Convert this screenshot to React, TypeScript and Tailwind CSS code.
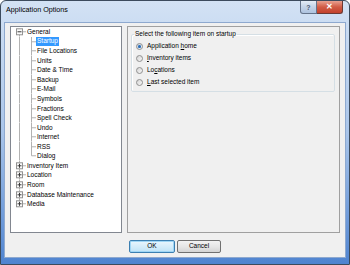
import React from "react";

const FONT = "font-['Liberation_Sans',Arial,sans-serif]";

const ROW = "h-[9.57px]";

type Node = { label: string; open?: boolean; children?: string[] };

const tree: Node[] = [
  {
    label: "General",
    open: true,
    children: [
      "Startup",
      "File Locations",
      "Units",
      "Date & Time",
      "Backup",
      "E-Mail",
      "Symbols",
      "Fractions",
      "Spell Check",
      "Undo",
      "Internet",
      "RSS",
      "Dialog",
    ],
  },
  { label: "Inventory Item" },
  { label: "Location" },
  { label: "Room" },
  { label: "Database Maintenance" },
  { label: "Media" },
];

const LINE = "#b2b2b2";

function Expander({ open, first, last }: { open?: boolean; first?: boolean; last?: boolean }) {
  const h = 9.57;
  const c = h / 2;
  return (
    <svg width="15" height={h} className="shrink-0">
      <line x1="8.5" y1={first ? c : 0} x2="8.5" y2={last ? c : h} stroke={LINE} />
      <line x1="11" y1={c} x2="15" y2={c} stroke={LINE} />
      <rect x="5.5" y={c - 3} width="6" height="6" fill="#fafafa" stroke="#929292" />
      <line x1="6.5" y1={c} x2="10.5" y2={c} stroke="#3a3a3a" />
      {!open && <line x1="8.5" y1={c - 2} x2="8.5" y2={c + 2} stroke="#3a3a3a" />}
    </svg>
  );
}

function Branch({ last }: { last?: boolean }) {
  const h = 9.57;
  const c = h / 2;
  return (
    <svg width="25" height={h} className="shrink-0">
      <line x1="8.5" y1="0" x2="8.5" y2={h} stroke={LINE} />
      <line x1="20.5" y1="0" x2="20.5" y2={last ? c : h} stroke={LINE} />
      <line x1="20.5" y1={c} x2="25" y2={c} stroke={LINE} />
    </svg>
  );
}

function Tree() {
  return (
    <div className="w-[112px] border border-[#828790] bg-white text-[6.5px] leading-[9.57px] text-black">
      {tree.map((n, i) => (
        <div key={n.label}>
          <div className={`flex items-center ${ROW}`}>
            <Expander open={n.open} first={i === 0} last={i === tree.length - 1} />
            <span className="pl-[1px]">{n.label}</span>
          </div>
          {n.open &&
            n.children?.map((c, j) => (
              <div key={c} className={`flex items-center ${ROW}`}>
                <Branch last={j === n.children!.length - 1} />
                <span
                  className={
                    j === 0
                      ? "bg-[#3399ff] px-[1px] text-white leading-[8.5px]"
                      : "px-[1px]"
                  }
                >
                  {c}
                </span>
              </div>
            ))}
        </div>
      ))}
    </div>
  );
}

function Radio({ checked, children }: { checked?: boolean; children: React.ReactNode }) {
  return (
    <div className="flex h-[12px] items-center gap-[4px]">
      <span className="flex h-[7px] w-[7px] items-center justify-center rounded-full border border-[#8f8f8f] bg-gradient-to-br from-[#d5d5d5] to-[#f7f7f7]">
        {checked && (
          <span className="h-[3px] w-[3px] rounded-full bg-[#2b6cb6] shadow-[0_0_1px_#6fb0f0]" />
        )}
      </span>
      <span>{children}</span>
    </div>
  );
}

function Panel() {
  return (
    <div className="flex-1 border border-[#a0a0a0] bg-[#f0f0f0] pl-[3px] pr-[4px] pt-[3px] text-[6.5px] leading-[8px] text-black">
      <fieldset className="rounded-[2px] border border-[#d5dfe5] pb-[3px] pl-[4px] shadow-[inset_1px_1px_0_#fff]">
        <legend className="ml-[-2px] px-[1px]">Select the following item on startup</legend>
        <div className="pt-[2px]">
          <Radio checked>
            Application <span className="underline">h</span>ome
          </Radio>
          <Radio>
            <span className="underline">I</span>nventory items
          </Radio>
          <Radio>
            Lo<span className="underline">c</span>ations
          </Radio>
          <Radio>
            <span className="underline">L</span>ast selected item
          </Radio>
        </div>
      </fieldset>
    </div>
  );
}

export default function App() {
  return (
    <div className={`h-[265px] w-[350px] overflow-hidden bg-white ${FONT}`}>
      <div className="flex h-full w-full flex-col rounded-t-[6px] border border-[#3c4b5d] bg-gradient-to-b from-[#d3e2f4] via-[#a9c5ea] to-[#4f84d0]">
        {/* title bar */}
        <div className="flex h-[21px] items-start justify-between">
          <span className="pl-[5px] pt-[4px] text-[7.2px] leading-[10px] text-black">
            Application Options
          </span>
          <div className="mr-[6px] flex">
            <div className="flex h-[13px] w-[17px] items-center justify-center rounded-bl-[3px] border border-t-0 border-[#64738a] bg-gradient-to-b from-[#e4ecf6] via-[#c3d3e8] to-[#aec3df] text-[7px] font-bold leading-none text-[#4a5a70]">
              ?
            </div>
            <div className="flex h-[13px] w-[26px] items-center justify-center rounded-br-[3px] border border-l-0 border-t-0 border-[#6b3a34] bg-gradient-to-b from-[#e8a090] via-[#d15b45] to-[#c2412c] text-[8px] font-bold leading-none text-white">
              ✕
            </div>
          </div>
        </div>

        {/* client area */}
        <div className="mx-[3px] mb-[6px] flex-1 border border-[#8ea9cf] bg-[#f0f0f0]">
          <div className="flex h-[210px] gap-[5px] pl-[5px] pr-[5px] pt-[3px]">
            <Tree />
            <Panel />
          </div>
          <div className="mt-[7px] flex justify-center gap-[2px] text-[6.5px] leading-none text-black">
            <button className="h-[13px] w-[46px] rounded-[2px] border border-[#3c7fb1] bg-gradient-to-b from-[#eaf6fd] to-[#bfe3f7] shadow-[inset_0_0_0_1px_#9fd6f5]">
              OK
            </button>
            <button className="h-[13px] w-[44px] rounded-[2px] border border-[#707070] bg-gradient-to-b from-[#f2f2f2] via-[#e6e6e6] to-[#d4d4d4]">
              Cancel
            </button>
          </div>
        </div>
      </div>
    </div>
  );
}
